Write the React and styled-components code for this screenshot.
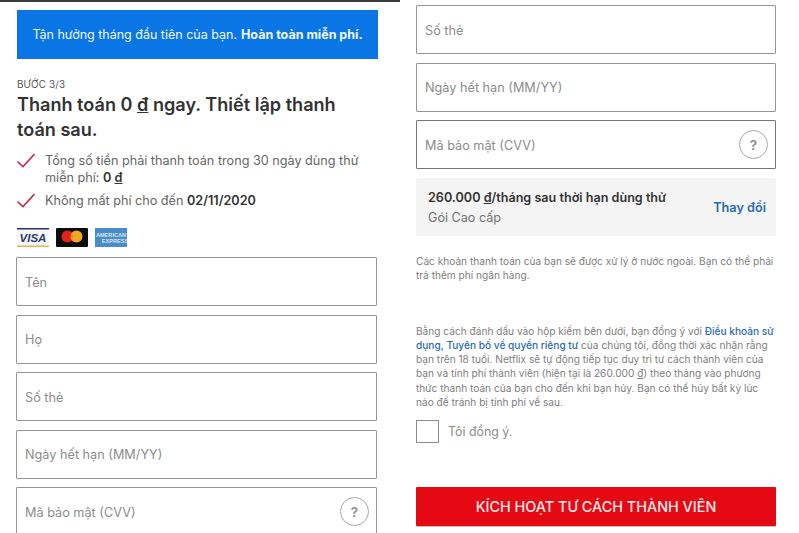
import styled, { createGlobalStyle } from "styled-components";

const Global = createGlobalStyle`
  html, body { margin: 0; padding: 0; background: #fff; }
  * { box-sizing: border-box; }
`;

const Page = styled.div`
  width: 799px;
  height: 533px;
  overflow: hidden;
  display: grid;
  grid-template-columns: 400px 399px;
  font-family: Inter, "Noto Sans", sans-serif;
  color: #333;
`;

const LeftCol = styled.section`
  height: 533px;
  overflow: hidden;
  border-top: 2px solid #3a3a3a;
  padding: 8px 23px 0 16px;
`;

const RightCol = styled.section`
  height: 533px;
  overflow: hidden;
  padding: 5px 23px 0 16px;
`;

const Banner = styled.div`
  height: 49px;
  margin: 0 -1px 0 1px;
  background: #0a76e6;
  color: #f2f8ff;
  font-size: 12.5px;
  display: flex;
  align-items: center;
  justify-content: center;
  white-space: nowrap;
  b { font-weight: 700; margin-left: 4px; }
`;

const Step = styled.div`
  margin: 20px 0 0 1px;
  font-size: 9.8px;
  line-height: 12px;
  letter-spacing: 0.2px;
  color: #555;
`;

const Title = styled.h1`
  margin: 1px 0 0 1px;
  font-size: 18.1px;
  line-height: 24.5px;
  font-weight: 600;
  color: #333;
`;

const Checks = styled.ul`
  list-style: none;
  margin: 12px 0 0 1px;
  padding: 0;
  display: flex;
  flex-direction: column;
  gap: 7px;
`;

const CheckRow = styled.li`
  display: grid;
  grid-template-columns: 28px 1fr;
  font-size: 12.65px;
  line-height: 16.5px;
  color: #666;
  padding-right: 8px;
  b { color: #333; font-weight: 600; }
`;

const CardLogos = styled.div`
  display: flex;
  gap: 7px;
  margin: 18.5px 0 0 1px;
  svg { display: block; }
`;

const Fields = styled.div`
  display: flex;
  flex-direction: column;
  gap: 8.5px;
  margin-top: ${(p) => p.$top || 0}px;
`;

const Field = styled.div`
  height: 49px;
  flex: none;
  border: 1px solid ${(p) => (p.$dark ? "#777" : "#949494")};
  border-radius: 1px;
  padding: 0 7px 0 8px;
  display: flex;
  align-items: center;
  justify-content: space-between;
  font-size: 12.7px;
  color: #8c8c8c;
`;

const FieldLabel = styled.span`
  padding-top: 1px;
`;

const Help = styled.span`
  width: 29px;
  height: 29px;
  border: 1.5px solid #a6a6a6;
  border-radius: 50%;
  display: flex;
  align-items: center;
  justify-content: center;
  font-size: 13.5px;
  font-weight: 600;
  color: #8c8c8c;
`;

const Plan = styled.div`
  height: 58px;
  margin-top: 9px;
  background: #f4f4f4;
  border-radius: 2px;
  padding: 1px 10px 0 12px;
  display: flex;
  align-items: center;
  justify-content: space-between;
`;

const PlanPrice = styled.div`
  font-size: 12.6px;
  line-height: 20px;
  font-weight: 600;
  color: #333;
`;

const PlanName = styled.div`
  font-size: 12.6px;
  line-height: 20px;
  color: #737373;
`;

const ChangeLink = styled.a`
  font-size: 12.7px;
  font-weight: 600;
  color: #2a6cb0;
`;

const Fine = styled.p`
  margin: ${(p) => p.$top}px 0 0;
  font-size: 10.15px;
  line-height: 14.3px;
  color: #808080;
  a { color: #2a6cb0; font-weight: 500; }
`;

const Agree = styled.label`
  display: flex;
  align-items: center;
  gap: 9px;
  margin-top: 11px;
  font-size: 12.4px;
  color: #8c8c8c;
`;

const Box = styled.span`
  width: 23px;
  height: 23px;
  border: 1px solid #8c8c8c;
  display: block;
`;

const Submit = styled.button`
  display: block;
  width: 100%;
  height: 39px;
  margin-top: 44px;
  border: 0;
  border-radius: 1px;
  background: #e50914;
  color: #fdeaea;
  font-family: inherit;
  font-size: 14.4px;
  font-weight: 500;
  box-shadow: 0 1px 0 rgba(0, 0, 0, 0.25);
`;

const Dong = styled.span`
  text-decoration: underline;
`;

const Tick = () => (
  <svg width="18" height="15" viewBox="0 0 18 15" fill="none">
    <path d="M0.5 8.5l5.5 5L17.5 1" stroke="#c4314b" strokeWidth="1.6" />
  </svg>
);

const Visa = () => (
  <svg width="32" height="19" viewBox="0 0 32 19">
    <rect width="32" height="19" fill="#f7f7f7" />
    <rect width="32" height="1.5" fill="#26336b" />
    <rect y="17.5" width="32" height="1.5" fill="#e3b94f" />
    <text x="16" y="14" textAnchor="middle" fontFamily="Liberation Sans" fontSize="11.5" fontWeight="700" fontStyle="italic" fill="#2b3a73">VISA</text>
  </svg>
);

const Master = () => (
  <svg width="32" height="19" viewBox="0 0 32 19">
    <rect width="32" height="19" rx="1" fill="#0c0c0c" />
    <circle cx="11.5" cy="8.5" r="6" fill="#e2231a" />
    <circle cx="20.5" cy="8.5" r="6" fill="#f5a623" />
    <path d="M16 5.8a6 6 0 0 1 0 5.4a6 6 0 0 1 0-5.4z" fill="#f0641e" />
  </svg>
);

const Amex = () => (
  <svg width="32" height="19" viewBox="0 0 32 19">
    <rect width="32" height="19" fill="#4a8cc8" />
    <text x="16" y="8.5" textAnchor="middle" fontFamily="Liberation Sans" fontSize="5.6" fontWeight="700" fill="#d5e6f5">AMERICAN</text>
    <text x="20" y="15" textAnchor="middle" fontFamily="Liberation Sans" fontSize="5.6" fontWeight="700" fill="#d5e6f5">EXPRESS</text>
  </svg>
);

export default function App() {
  return (
    <Page>
      <Global />
      <LeftCol>
        <Banner>
          Tận hưởng tháng đầu tiên của bạn. <b>Hoàn toàn miễn phí.</b>
        </Banner>
        <Step>BƯỚC 3/3</Step>
        <Title>
          Thanh toán 0 <Dong>đ</Dong> ngay. Thiết lập thanh toán sau.
        </Title>
        <Checks>
          <CheckRow>
            <Tick />
            <span>
              Tổng số tiền phải thanh toán trong 30 ngày dùng thử miễn phí: <b>0 <Dong>đ</Dong></b>
            </span>
          </CheckRow>
          <CheckRow>
            <Tick />
            <span>
              Không mất phí cho đến <b>02/11/2020</b>
            </span>
          </CheckRow>
        </Checks>
        <CardLogos>
          <Visa />
          <Master />
          <Amex />
        </CardLogos>
        <Fields $top={10}>
          <Field><FieldLabel>Tên</FieldLabel></Field>
          <Field><FieldLabel>Họ</FieldLabel></Field>
          <Field><FieldLabel>Số thẻ</FieldLabel></Field>
          <Field><FieldLabel>Ngày hết hạn (MM/YY)</FieldLabel></Field>
          <Field>
            <FieldLabel>Mã bảo mật (CVV)</FieldLabel>
            <Help>?</Help>
          </Field>
        </Fields>
      </LeftCol>
      <RightCol>
        <Fields>
          <Field><FieldLabel>Số thẻ</FieldLabel></Field>
          <Field><FieldLabel>Ngày hết hạn (MM/YY)</FieldLabel></Field>
          <Field $dark>
            <FieldLabel>Mã bảo mật (CVV)</FieldLabel>
            <Help>?</Help>
          </Field>
        </Fields>
        <Plan>
          <div>
            <PlanPrice>
              260.000 <Dong>đ</Dong>/tháng sau thời hạn dùng thử
            </PlanPrice>
            <PlanName>Gói Cao cấp</PlanName>
          </div>
          <ChangeLink>Thay đổi</ChangeLink>
        </Plan>
        <Fine $top={18}>
          Các khoản thanh toán của bạn sẽ được xử lý ở nước ngoài. Bạn có thể phải trả thêm phí ngân hàng.
        </Fine>
        <Fine $top={41}>
          Bằng cách đánh dấu vào hộp kiểm bên dưới, bạn đồng ý với <a>Điều khoản sử dụng, Tuyên bố về quyền riêng tư</a> của chúng tôi, đồng thời xác nhận rằng bạn trên 18 tuổi. Netflix sẽ tự động tiếp tục duy trì tư cách thành viên của bạn và tính phí thành viên (hiện tại là 260.000 <Dong>đ</Dong>) theo tháng vào phương thức thanh toán của bạn cho đến khi bạn hủy. Bạn có thể hủy bất kỳ lúc nào để tránh bị tính phí về sau.
        </Fine>
        <Agree>
          <Box />
          Tôi đồng ý.
        </Agree>
        <Submit>KÍCH HOẠT TƯ CÁCH THÀNH VIÊN</Submit>
      </RightCol>
    </Page>
  );
}
